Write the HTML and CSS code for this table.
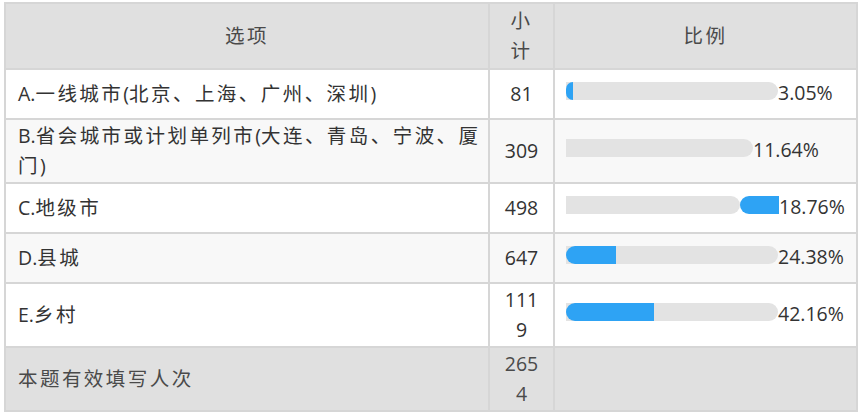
FILE: index.html
```html
<!DOCTYPE html>
<html lang="zh-CN">
<head>
<meta charset="utf-8">
<title>统计</title>
<link rel="stylesheet" href="styles.css">
</head>
<body>
<div class="wrap">
<table class="report">
  <colgroup>
    <col class="c-opt">
    <col class="c-num">
    <col class="c-bar">
  </colgroup>
  <thead>
    <tr><th><span class="zh">选项</span></th><th class="num"><span class="zh">小计</span></th><th><span class="zh">比例</span></th></tr>
  </thead>
  <tbody>
    <tr class="row-w">
      <td class="opt">A.<span class="zh">一线城市</span>(<span class="zh">北京、上海、广州、深圳</span>)</td>
      <td class="num">81</td>
      <td class="bar-cell"><div class="bar"><div class="track" style="width:212px"><div class="fill" style="width:7px"></div></div><span class="pct">3.05%</span></div></td>
    </tr>
    <tr class="row-g">
      <td class="opt">B.<span class="zh">省会城市或计划单列市</span>(<span class="zh">大连、青岛、宁波、厦门</span>)</td>
      <td class="num">309</td>
      <td class="bar-cell"><div class="bar"><div class="track" style="width:187px"></div><span class="pct">11.64%</span></div></td>
    </tr>
    <tr class="row-w">
      <td class="opt">C.<span class="zh">地级市</span></td>
      <td class="num">498</td>
      <td class="bar-cell"><div class="bar"><div class="track" style="width:174px"></div><div class="tail" style="width:39px"></div><span class="pct">18.76%</span></div></td>
    </tr>
    <tr class="row-g">
      <td class="opt">D.<span class="zh">县城</span></td>
      <td class="num">647</td>
      <td class="bar-cell"><div class="bar"><div class="track" style="width:212px"><div class="fill" style="width:50px"></div></div><span class="pct">24.38%</span></div></td>
    </tr>
    <tr class="row-w">
      <td class="opt">E.<span class="zh">乡村</span></td>
      <td class="num">1119</td>
      <td class="bar-cell"><div class="bar"><div class="track" style="width:212px"><div class="fill" style="width:88px"></div></div><span class="pct">42.16%</span></div></td>
    </tr>
  </tbody>
  <tfoot>
    <tr>
      <td class="opt"><span class="zh">本题有效填写人次</span></td>
      <td class="num">2654</td>
      <td class="empty"></td>
    </tr>
  </tfoot>
</table>
</div>
</body>
</html>
```
FILE: styles.css
```css
html, body {
  margin: 0;
  padding: 0;
  background: #ffffff;
}
.wrap {
  padding: 2px 5px 0 4px;
}
.report {
  width: 854px;
  table-layout: fixed;
  border-collapse: separate;
  border-spacing: 0;
  border-left: 2px solid #d6d6d6;
  border-top: 2px solid #d6d6d6;
  font-family: "Open Sans", "Noto Sans CJK SC", sans-serif;
  font-size: 19.5px;
  line-height: 30px;
  color: #333333;
}
.zh {
  letter-spacing: 2.45px;
}
.c-opt { width: 484px; }
.c-num { width: 65px; }
.c-bar { width: 303px; }
.report th,
.report td {
  border-right: 2px solid #d6d6d6;
  border-bottom: 2px solid #d6d6d6;
  vertical-align: middle;
}
.report th {
  background: #e0e0e0;
  font-weight: normal;
  color: #4a4a4a;
  text-align: center;
  padding: 2px 14px;
}
.report td {
  padding: 1px 12px;
}
.report td.opt {
  padding-right: 5px;
}
.report td.num,
.report th.num {
  text-align: center;
  padding-left: 14px;
  padding-right: 14px;
  word-break: break-all;
}
.row-w td { background: #ffffff; }
.row-g td { background: #f8f8f8; }
tfoot td {
  background: #e0e0e0;
  color: #4a4a4a;
}
.report td.bar-cell {
  padding: 4px 10px 10px 11px;
}
.bar {
  display: flex;
  align-items: center;
}
.track {
  position: relative;
  height: 18px;
  background: #e3e3e3;
  border-radius: 0 9px 9px 0;
  overflow: hidden;
  flex: none;
}
.fill {
  height: 100%;
  background: #2ea3f4;
  border-radius: 9px 0 0 9px;
}
.tail {
  height: 18px;
  background: #2ea3f4;
  border-radius: 9px 0 0 9px;
  flex: none;
}
.pct {
  padding-top: 4px;
  white-space: nowrap;
}
```
